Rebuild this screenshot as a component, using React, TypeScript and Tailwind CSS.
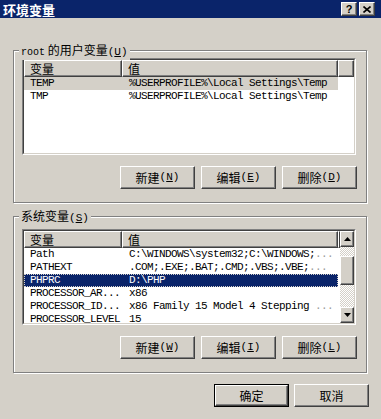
import React from "react";

const cjk = "font-['SimSun','Noto_Sans_CJK_SC',sans-serif]";
const mono = "font-['Liberation_Mono',monospace]";
const raised =
  "border border-t-white border-l-white border-r-[#404040] border-b-[#404040] shadow-[inset_-1px_-1px_0_#808080]";

function Key({ k }: { k: string }) {
  return (
    <span className={`${mono} text-[11px]`}>
      (<span className="underline">{k}</span>)
    </span>
  );
}

function Btn({ label, k, def }: { label: string; k?: string; def?: boolean }) {
  const inner = (
    <div
      className={`${raised} bg-[#d4d0c8] h-full flex items-center justify-center text-[12px] text-black ${cjk}`}
    >
      {label}
      {k && <Key k={k} />}
    </div>
  );
  if (def) return <div className="w-[75px] h-[23px] border border-black">{inner}</div>;
  return <div className="w-[75px] h-[23px]">{inner}</div>;
}

function Group({ label, children, cls }: { label: React.ReactNode; children: React.ReactNode; cls: string }) {
  return (
    <div className={`relative border border-[#808080] shadow-[inset_1px_1px_0_#fff,1px_1px_0_#fff] ${cls}`}>
      <div className={`absolute -top-[8px] left-[5px] px-[2px] bg-[#d4d0c8] text-[12px] leading-[14px] ${cjk}`}>
        {label}
      </div>
      {children}
    </div>
  );
}

function Header() {
  return (
    <div className={`flex h-[17px] text-[12px] leading-[15px] ${cjk}`}>
      <div className={`${raised} bg-[#d4d0c8] w-[98px] pl-[5px]`}>变量</div>
      <div className={`${raised} bg-[#d4d0c8] w-[216px] pl-[5px]`}>值</div>
      <div className={`${raised} bg-[#d4d0c8] flex-1`} />
    </div>
  );
}

type Row = { n: string; v: string; more?: boolean; sel?: "gray" | "blue" };

function Rows({ rows }: { rows: Row[] }) {
  return (
    <div className={`${mono} text-[11px] tracking-[-0.6px]`}>
      {rows.map((r) => (
        <div
          key={r.n}
          className={`flex w-[314px] h-[13px] leading-[13px] whitespace-nowrap ${
            r.sel === "gray"
              ? "bg-[#d4d0c8] text-black"
              : r.sel === "blue"
              ? "bg-[#0a246a] text-white outline outline-1 outline-dotted outline-[#d4d0c8] -outline-offset-1"
              : "text-black"
          }`}
        >
          <div className="w-[98px] pl-[6px] overflow-hidden">{r.n}</div>
          <div className="pl-[7px]">
            {r.v}
            {r.more && <span className="text-[#9a9a9a]">...</span>}
          </div>
        </div>
      ))}
    </div>
  );
}

function Sunken({ children, cls }: { children: React.ReactNode; cls: string }) {
  return (
    <div className={`border border-t-[#808080] border-l-[#808080] border-r-white border-b-white ${cls}`}>
      <div className="h-full border border-t-[#404040] border-l-[#404040] border-r-[#d4d0c8] border-b-[#d4d0c8] bg-white overflow-hidden">
        {children}
      </div>
    </div>
  );
}

function Arrow({ up }: { up?: boolean }) {
  return (
    <div className={`${raised} bg-[#d4d0c8] h-[16px] flex items-center justify-center`}>
      <svg width="7" height="4" viewBox="0 0 7 4">
        {up ? <polygon points="3.5,0 7,4 0,4" fill="#000" /> : <polygon points="0,0 7,0 3.5,4" fill="#000" />}
      </svg>
    </div>
  );
}

export default function App() {
  return (
    <div className="w-[381px] h-[419px] bg-[#d4d0c8] flex flex-col overflow-hidden">
      <div className="h-[18px] bg-[#0a246a] flex items-center justify-between pl-[3px] pr-[6px]">
        <span className={`text-white font-bold text-[13px] leading-none ${cjk}`}>环境变量</span>
        <div className="flex gap-[2px]">
          <div className={`${raised} bg-[#d4d0c8] w-[16px] h-[14px] flex items-center justify-center text-[11px] font-bold leading-none font-['Liberation_Sans',sans-serif]`}>
            ?
          </div>
          <div className={`${raised} bg-[#d4d0c8] w-[16px] h-[14px] flex items-center justify-center`}>
            <svg width="8" height="7" viewBox="0 0 8 7">
              <path d="M0.5 0.5 L7.5 6.5 M7.5 0.5 L0.5 6.5" stroke="#000" strokeWidth="1.6" />
            </svg>
          </div>
        </div>
      </div>

      <div className="pl-[13px] pr-[14px] pt-[32px] flex flex-col">
        <Group
          cls="h-[153px] pt-[7px] pl-[8px] pr-[10px]"
          label={
            <span>
              <span className={`${mono} text-[10px]`}>root</span> 的用户变量<Key k="U" />
            </span>
          }
        >
          <Sunken cls="h-[97px]">
            <Header />
            <Rows
              rows={[
                { n: "TEMP", v: "%USERPROFILE%\\Local Settings\\Temp", sel: "gray" },
                { n: "TMP", v: "%USERPROFILE%\\Local Settings\\Temp" },
              ]}
            />
          </Sunken>
          <div className="flex justify-end gap-[6px] mt-[11px] -mr-[1px]">
            <Btn label="新建" k="N" />
            <Btn label="编辑" k="E" />
            <Btn label="删除" k="D" />
          </div>
        </Group>

        <Group
          cls="mt-[13px] h-[157px] pt-[12px] pl-[8px] pr-[10px]"
          label={
            <span>
              系统变量<Key k="S" />
            </span>
          }
        >
          <Sunken cls="h-[96px]">
            <div className="flex h-full">
              <div className="flex-1">
                <Header />
                <Rows
                  rows={[
                    { n: "Path", v: "C:\\WINDOWS\\system32;C:\\WINDOWS;", more: true },
                    { n: "PATHEXT", v: ".COM;.EXE;.BAT;.CMD;.VBS;.VBE;", more: true },
                    { n: "PHPRC", v: "D:\\PHP", sel: "blue" },
                    { n: "PROCESSOR_AR...", v: "x86" },
                    { n: "PROCESSOR_ID...", v: "x86 Family 15 Model 4 Stepping ", more: true },
                    { n: "PROCESSOR_LEVEL", v: "15" },
                  ]}
                />
              </div>
              <div className="w-[16px] flex flex-col bg-[repeating-conic-gradient(#fff_0_25%,#d4d0c8_0_50%)] bg-[length:2px_2px]">
                <Arrow up />
                <div className="h-[9px]" />
                <div className={`${raised} bg-[#d4d0c8] h-[29px]`} />
                <div className="flex-1" />
                <Arrow />
              </div>
            </div>
          </Sunken>
          <div className="flex justify-end gap-[6px] mt-[11px] -mr-[1px]">
            <Btn label="新建" k="W" />
            <Btn label="编辑" k="I" />
            <Btn label="删除" k="L" />
          </div>
        </Group>

        <div className="flex justify-end gap-[5px] mt-[11px] -mr-[2px]">
          <Btn label="确定" def />
          <Btn label="取消" />
        </div>
      </div>
    </div>
  );
}
